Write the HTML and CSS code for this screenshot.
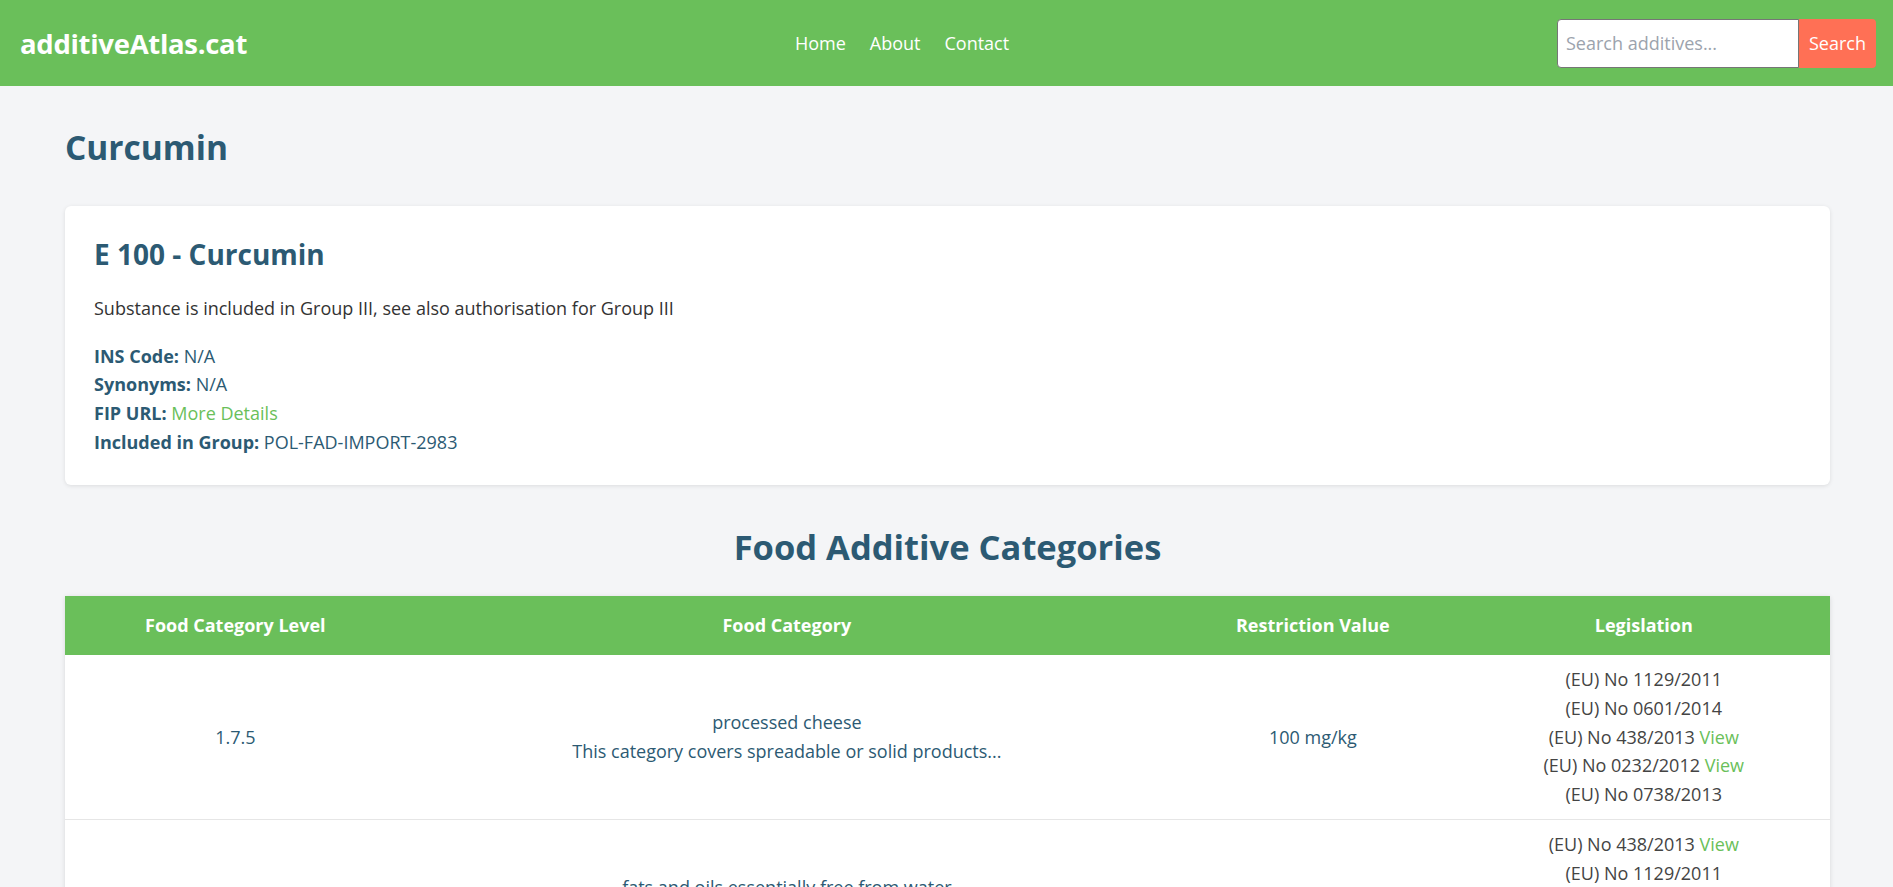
FILE: index.html
```html
<!DOCTYPE html>
<html lang="en">
<head>
<meta charset="utf-8">
<title>Curcumin - additiveAtlas.cat</title>
<link rel="stylesheet" href="styles.css">
</head>
<body>
<header class="navbar">
  <a class="logo" href="#">additiveAtlas.cat</a>
  <nav class="nav-links">
    <a href="#">Home</a>
    <a href="#">About</a>
    <a href="#">Contact</a>
  </nav>
  <form class="search">
    <input class="search-input" type="text" placeholder="Search additives...">
    <button class="search-btn" type="button">Search</button>
  </form>
</header>

<main class="content">
  <h1 class="page-title">Curcumin</h1>

  <section class="card">
    <h2 class="card-title">E 100 - Curcumin</h2>
    <p class="desc">Substance is included in Group III, see also authorisation for Group III</p>
    <div class="details">
      <div><strong>INS Code:</strong> N/A</div>
      <div><strong>Synonyms:</strong> N/A</div>
      <div><strong>FIP URL:</strong> <a class="link" href="#">More Details</a></div>
      <div><strong>Included in Group:</strong> POL-FAD-IMPORT-2983</div>
    </div>
  </section>

  <h2 class="section-title">Food Additive Categories</h2>

  <table class="cat-table">
    <thead>
      <tr>
        <th class="c1">Food Category Level</th>
        <th class="c2">Food Category</th>
        <th class="c3">Restriction Value</th>
        <th class="c4">Legislation</th>
      </tr>
    </thead>
    <tbody>
      <tr>
        <td>1.7.5</td>
        <td>processed cheese<br>This category covers spreadable or solid products...</td>
        <td>100 mg/kg</td>
        <td class="leg">
          <div>(EU) No 1129/2011</div>
          <div>(EU) No 0601/2014</div>
          <div>(EU) No 438/2013 <a class="link" href="#">View</a></div>
          <div>(EU) No 0232/2012 <a class="link" href="#">View</a></div>
          <div>(EU) No 0738/2013</div>
        </td>
      </tr>
      <tr>
        <td>2.1</td>
        <td>fats and oils essentially free from water<br>This category covers fats and oils of vegetable or animal origin...</td>
        <td>quantum satis</td>
        <td class="leg">
          <div>(EU) No 438/2013 <a class="link" href="#">View</a></div>
          <div>(EU) No 1129/2011</div>
          <div>(EU) No 0601/2014</div>
          <div>(EU) No 0232/2012 <a class="link" href="#">View</a></div>
          <div>(EU) No 0738/2013</div>
        </td>
      </tr>
    </tbody>
  </table>
</main>
</body>
</html>
```

FILE: styles.css
```css
* { box-sizing: border-box; }

body {
  margin: 0;
  background: #f4f5f7;
  font-family: "Open Sans", "Noto Sans", sans-serif;
  font-size: 18px;
  line-height: 1.6;
  color: #2c5a73;
}

a { text-decoration: none; }

.navbar {
  height: 86px;
  background: #6abf5a;
  display: flex;
  align-items: center;
  justify-content: space-between;
  padding: 0 17px 0 20px;
}

.logo {
  color: #fff;
  font-weight: 700;
  font-size: 27.5px;
  letter-spacing: -0.3px;
  line-height: 1.2;
}

.nav-links {
  display: flex;
  gap: 24px;
  padding-top: 1px;
}

.nav-links a {
  color: #fff;
  font-size: 18px;
}

.search {
  display: flex;
  margin: 0;
}

.search-input {
  width: 242px;
  height: 49px;
  border: 1px solid #767676;
  border-radius: 4px 0 0 4px;
  padding: 0 8px;
  font-family: inherit;
  font-size: 18px;
  color: #333;
  background: #fff;
  outline: none;
}

.search-input::placeholder { color: #9ca3ad; }

.search-btn {
  width: 77px;
  height: 49px;
  border: none;
  border-radius: 0 4px 4px 0;
  background: #ff7055;
  color: #fff;
  font-family: inherit;
  font-size: 18px;
  padding: 0;
}

.content {
  padding: 41px 63px 40px 65px;
}

.page-title {
  margin: 0 0 39px;
  font-size: 33.5px;
  line-height: 1.2;
  font-weight: 700;
  color: #2c5a73;
}

.card {
  background: #fff;
  border-radius: 6px;
  box-shadow: 0 1px 4px rgba(0, 0, 0, 0.1);
  padding: 32px 29px 28px;
}

.card-title {
  margin: 0 0 22px;
  font-size: 28px;
  line-height: 1.2;
  font-weight: 700;
  color: #2c5a73;
}

.desc {
  margin: 0 0 19px;
  color: #333;
}

.details strong { font-weight: 700; }

.link { color: #6abf5a; }

.section-title {
  margin: 41px 0 29px;
  text-align: center;
  font-size: 34.5px;
  line-height: 1.2;
  font-weight: 700;
  color: #2c5a73;
}

.cat-table {
  width: 100%;
  border-collapse: collapse;
  background: #fff;
  box-shadow: 0 1px 5px rgba(0, 0, 0, 0.12);
}

.cat-table th {
  background: #6abf5a;
  color: #fff;
  font-weight: 700;
  padding: 15px 10px;
  text-align: center;
}

.c1 { width: 19.3%; }
.c2 { width: 43.2%; }
.c3 { width: 16.4%; }
.c4 { width: 21.1%; }

.cat-table td {
  padding: 10px;
  text-align: center;
  vertical-align: middle;
  border-bottom: 1px solid #e6e6e6;
}

.cat-table td.leg { color: #444; }
```
